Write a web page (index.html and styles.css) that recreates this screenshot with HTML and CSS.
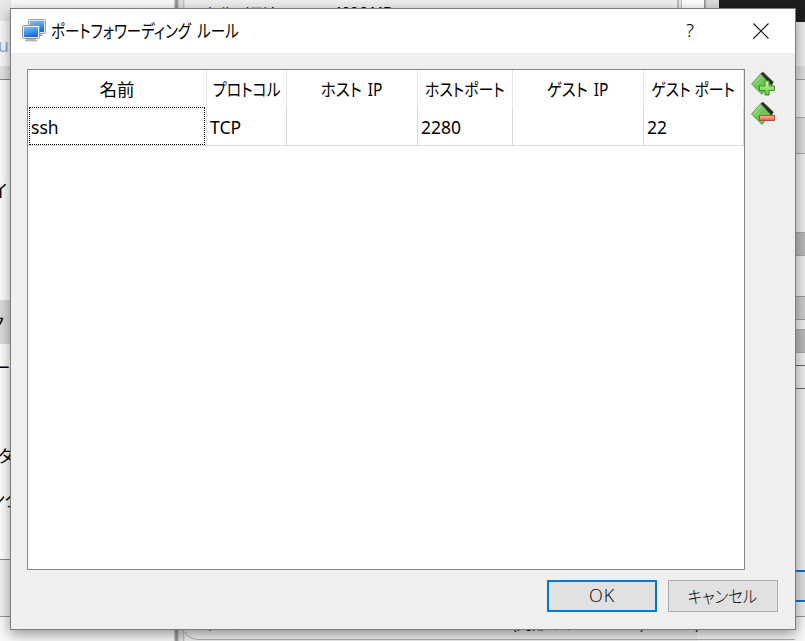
FILE: index.html
```html
<!DOCTYPE html>
<html lang="ja">
<head>
<meta charset="utf-8">
<title>ポートフォワーディング ルール</title>
<link rel="stylesheet" href="styles.css">
</head>
<body>
<div class="desktop">
  <div class="win manager">
    <span class="bg-text memory">メインメモリー:</span>
    <span class="bg-text amount">4096 MB</span>
    <div class="group-box"></div>
    <span class="bg-text adapter">アダプター</span>
    <span class="bg-text adapter-type">ト (内部ネットワーク, 'intnet')</span>
  </div>
  <div class="split"></div>
  <div class="win scroll-gap"></div>
  <div class="win right-edge"></div>
  <div class="win console"></div>
  <div class="nav">
    <div class="nav-title">us</div>
    <div class="nav-band"></div>
    <div class="nav-list">
      <span class="nav-item i1">イ</span>
      <div class="nav-selected"></div>
      <span class="nav-item i2">ク</span>
      <span class="nav-item i3">ー</span>
      <span class="nav-item i4">ルダー</span>
      <span class="nav-item i5">ング</span>
    </div>
    <div class="nav-foot"></div>
  </div>
  <div class="strip">
    <div class="s head"></div><div class="s tab"></div><div class="s box"></div><div class="s grey"></div><div class="s pale"></div><div class="s dark"></div><div class="s pale2"></div><div class="s mid"></div><div class="s pale3"></div><div class="s dark2"></div><div class="s pale4"></div><div class="s field"></div><div class="s rest"></div><div class="s lower"></div><div class="s button"></div><div class="s end"></div>
  </div>

  <div class="dialog">
    <header class="titlebar">
      <svg class="app-icon" width="24" height="24" viewBox="0 0 24 24">
        <defs><linearGradient id="scr" x1="0" y1="0" x2=".3" y2="1"><stop offset="0" stop-color="#7cc0fb"/><stop offset=".5" stop-color="#4a9df2"/><stop offset="1" stop-color="#1a6ae0"/></linearGradient></defs>
        <path d="M13 15h6l2 2h-8z" fill="#aaa"/>
        <rect x="6.500" y=".5" width="17" height="14" rx="1" fill="#e4e4e4" stroke="#a0a0a0"/>
        <rect x="8" y="2" width="14" height="11" fill="url(#scr)"/>
        <path d="M5 20h8l2 2H3z" fill="#c4c4c4" stroke="#999" stroke-width=".6"/>
        <rect x=".5" y="6.500" width="17" height="13" rx="1" fill="#eee" stroke="#949494"/>
        <rect x="2" y="8" width="14" height="10" fill="url(#scr)"/>
      </svg>
      <h1><span class="fit title-fit">ポートフォワーディング ルール</span></h1>
      <span class="help">?</span>
      <svg class="close" width="16" height="16" viewBox="0 0 16 16"><path d="M.5.5l15 15M15.5.5l-15 15" stroke="#111" stroke-width="1.1" fill="none"/></svg>
    </header>
    <div class="body">
      <div class="main">
        <div class="table">
          <div class="row header">
            <div><span class="fit">名前</span></div><div><span class="fit f-proto">プロトコル</span></div><div><span class="fit f-host">ホスト IP</span></div><div><span class="fit f-hport">ホストポート</span></div><div><span class="fit f-guest">ゲスト IP</span></div><div><span class="fit f-gport">ゲスト ポート</span></div>
          </div>
          <div class="row">
            <div class="focus">ssh</div><div>TCP</div><div></div><div>2280</div><div></div><div>22</div>
          </div>
        </div>
        <div class="tools">
          <svg width="26" height="26" viewBox="0 0 26 26">
            <defs><linearGradient id="card" x1="0" y1="0" x2="1" y2="1"><stop offset="0" stop-color="#b7e8a0"/><stop offset=".5" stop-color="#5cc44a"/><stop offset="1" stop-color="#78d060"/></linearGradient><linearGradient id="plus" x1="0" y1="0" x2="0" y2="1"><stop offset="0" stop-color="#d8faa8"/><stop offset="1" stop-color="#58cc30"/></linearGradient></defs>
            <path d="M10.500 2.500L13 1 23.500 11 21.500 15z" fill="#2c2c2c" stroke="#777" stroke-width=".5"/>
            <path d="M1.500 13L10.500 3 20 13 12 23.500z" fill="url(#card)" stroke="#4a9040" stroke-width=".8"/>
            <path d="M5 12l6-6.500m-4 9l7-7m-5 9l7-7" stroke="#a4dc94" stroke-width=".7"/>
            <path d="M15 10h4v5h5.500v4.500H19V24h-4v-4.500h-5.500V15H15z" fill="url(#plus)" stroke="#3c8c2c"/>
          </svg>
          <svg width="26" height="26" viewBox="0 0 26 26">
            <defs><linearGradient id="minus" x1="0" y1="0" x2="0" y2="1"><stop offset="0" stop-color="#ffc4ac"/><stop offset="1" stop-color="#f05432"/></linearGradient></defs>
            <path d="M10.500 2.500L13 1 23.500 11 21.500 15z" fill="#2c2c2c" stroke="#777" stroke-width=".5"/>
            <path d="M1.500 13L10.500 3 20 13 12 23.500z" fill="url(#card)" stroke="#4a9040" stroke-width=".8"/>
            <path d="M5 12l6-6.500m-4 9l7-7m-5 9l7-7" stroke="#a4dc94" stroke-width=".7"/>
            <rect x="9.500" y="14.500" width="15" height="5" fill="url(#minus)" stroke="#c04a34"/>
          </svg>
        </div>
      </div>
      <footer>
        <button class="ok">OK</button>
        <button><span class="fit f-cancel">キャンセル</span></button>
      </footer>
    </div>
  </div>
</div>
</body>
</html>
```
FILE: styles.css
```css
* { box-sizing: border-box; }
body { margin: 0; font-family: "Noto Sans", "Noto Sans CJK JP", sans-serif; font-size: 17.5px; color: #000; }
.desktop { position: relative; width: 805px; height: 641px; overflow: hidden; background: #fafafa; }
.win { position: absolute; }
.manager { left: 178px; top: 0; width: 519px; height: 641px; background: #f0f0f0; }
.split { position: absolute; left: 174px; top: 0; width: 11px; height: 641px; background: linear-gradient(90deg, #ddd, #8c8c8c 2px, #aaa 4px, #ddd 5px, #e4e4e4 9px, #b0b0b0 9px, #f0f0f0); }
.bg-text { position: absolute; font-family: "Noto Sans CJK JP", sans-serif; font-size: 16px; line-height: 20px; white-space: nowrap; }
.memory { left: 20px; top: 2px; letter-spacing: -3.3px; }
.amount { left: 155px; top: 2px; letter-spacing: -.4px; }
.group-box { position: absolute; left: 5px; top: 580px; width: 700px; height: 60px; border: 1px solid #b0b0b0; border-radius: 14px; }
.adapter { left: 14px; top: 612px; letter-spacing: -2px; }
.adapter-type { left: 315px; top: 612px; letter-spacing: -.6px; }
.scroll-gap { left: 677px; top: 0; width: 28px; height: 8px; background: linear-gradient(90deg, #bbb 2px, #e8e8e8 2px 4px, #bbb 4px 5px, #fff 5px); }
.right-edge { left: 704px; top: 0; width: 15px; height: 8px; background: linear-gradient(90deg, #888, #ddd 3px); }
.console { left: 719px; top: 0; width: 86px; height: 22px; background: #1e1e1e; }
.nav { position: absolute; left: 0; top: 0; width: 11px; height: 641px; overflow: hidden; }
.nav-title { height: 66px; border-top: 21px solid #e8e8e8; background: #fafafa; color: #8caed4; line-height: 48px; text-indent: -2px; }
.nav-band { height: 13px; background: #e4e4e4; }
.nav-list { position: relative; height: 481px; background: #fff; border: solid #85858a; border-width: 1px 0; }
.nav-item { position: absolute; line-height: 24px; white-space: nowrap; }
.i1 { left: -9px; top: 98px; }
.i2 { left: -12px; top: 230px; }
.i3 { left: -7px; top: 275px; }
.i4 { left: -20px; top: 363px; }
.i5 { left: -12px; top: 407px; letter-spacing: -1px; }
.nav-selected { margin-top: 220px; height: 44px; background: #dcdcdc; }
.nav-foot { height: 57px; background: #f0f0f0; border-bottom: 1px solid #999; }
.strip { position: absolute; left: 795px; top: 22px; width: 10px; height: 619px; display: flex; flex-direction: column; background: #f8f8f8; }
.s { background: #f0f0f0; flex: none; }
.head { height: 44px; }
.tab { height: 13px; background: #ddd; }
.box { height: 38px; border-top: 1px solid #999; }
.grey { height: 37px; background: #ddd; border: solid #aaa; border-width: 1px 0; }
.pale { height: 78px; }
.dark { height: 24px; background: #bbb; border: solid #aaa; border-width: 1px 0; }
.pale2 { height: 40px; }
.mid { height: 24px; background: #ccc; border: solid #999; border-width: 1px 0; }
.pale3 { height: 9px; }
.dark2 { height: 24px; background: #bbb; border: solid #aaa; border-width: 1px 0; }
.pale4 { height: 12px; }
.field { height: 24px; border: solid #666; border-width: 1px 0; }
.rest { height: 170px; }
.lower { height: 11px; }
.button { height: 32px; background: #e1e1e1; border: solid #0078d7; border-width: 2px 0; }
.end { height: 15px; border-bottom: 1px solid #999; }

.dialog { position: absolute; left: 10px; top: 8px; width: 786px; height: 622px; background: #efefef; border: 1px solid #7c7c7c; box-shadow: 0 4px 13px rgba(0,0,0,.42); display: flex; flex-direction: column; }
.titlebar { height: 44px; background: #fff; display: flex; align-items: center; padding-left: 11px; }
.app-icon { flex: none; }
h1 { margin: 0 0 0 5px; font-size: 18px; font-weight: 400; width: 629px; line-height: 24px; }
.help { width: 20px; text-align: center; font-size: 19px; font-weight: 350; padding-bottom: 2px; }
.close { margin-left: 53px; }
.fit { display: inline-block; white-space: nowrap; font-feature-settings: "palt"; }
.title-fit { transform: scaleX(.807); transform-origin: 0 50%; word-spacing: 3px; }
.body { flex: 1; padding: 16px 17px 17px 16px; display: flex; flex-direction: column; }
.main { display: flex; gap: 5px; height: 501px; }
.table { width: 718px; background: #fff; border: 1px solid #828790; }
.row { display: grid; grid-template-columns: 179px 80px 131px 95px 131px 100px; height: 39px; }
.row > div { border-right: 1px solid #d8d8d8; border-bottom: 1px solid #d8d8d8; padding-left: 3px; display: flex; align-items: center; padding-top: 2px; }
.row.header { height: 37px; }
.row.header > div { border-bottom: 0; border-right-color: #e5e5e5; justify-content: center; padding: 0; }
.row > div.focus { position: relative; padding: 1px 0 0 3px; }
.focus::after { content: ""; position: absolute; inset: 0 1px 0 1px; border: 1px dotted #000; }
.f-proto, .f-hport, .f-gport { transform: scaleX(.85); }
.f-host, .f-guest { transform: scaleX(.89); word-spacing: 2px; }
.tools { width: 26px; display: flex; flex-direction: column; gap: 4px; padding-top: 2px; }
footer { display: flex; justify-content: flex-end; gap: 11px; margin-top: 10px; }
button { width: 110px; height: 32px; padding: 0 0 2px; background: #e1e1e1; border: 1px solid #adadad; font: 300 17px "Noto Sans CJK JP", sans-serif; color: #000; display: flex; align-items: center; justify-content: center; }
.ok { border: 2px solid #0078d7; letter-spacing: 1px; font-family: "Open Sans", sans-serif; font-size: 18px; }
.f-cancel { transform: scaleX(.9); }
```
